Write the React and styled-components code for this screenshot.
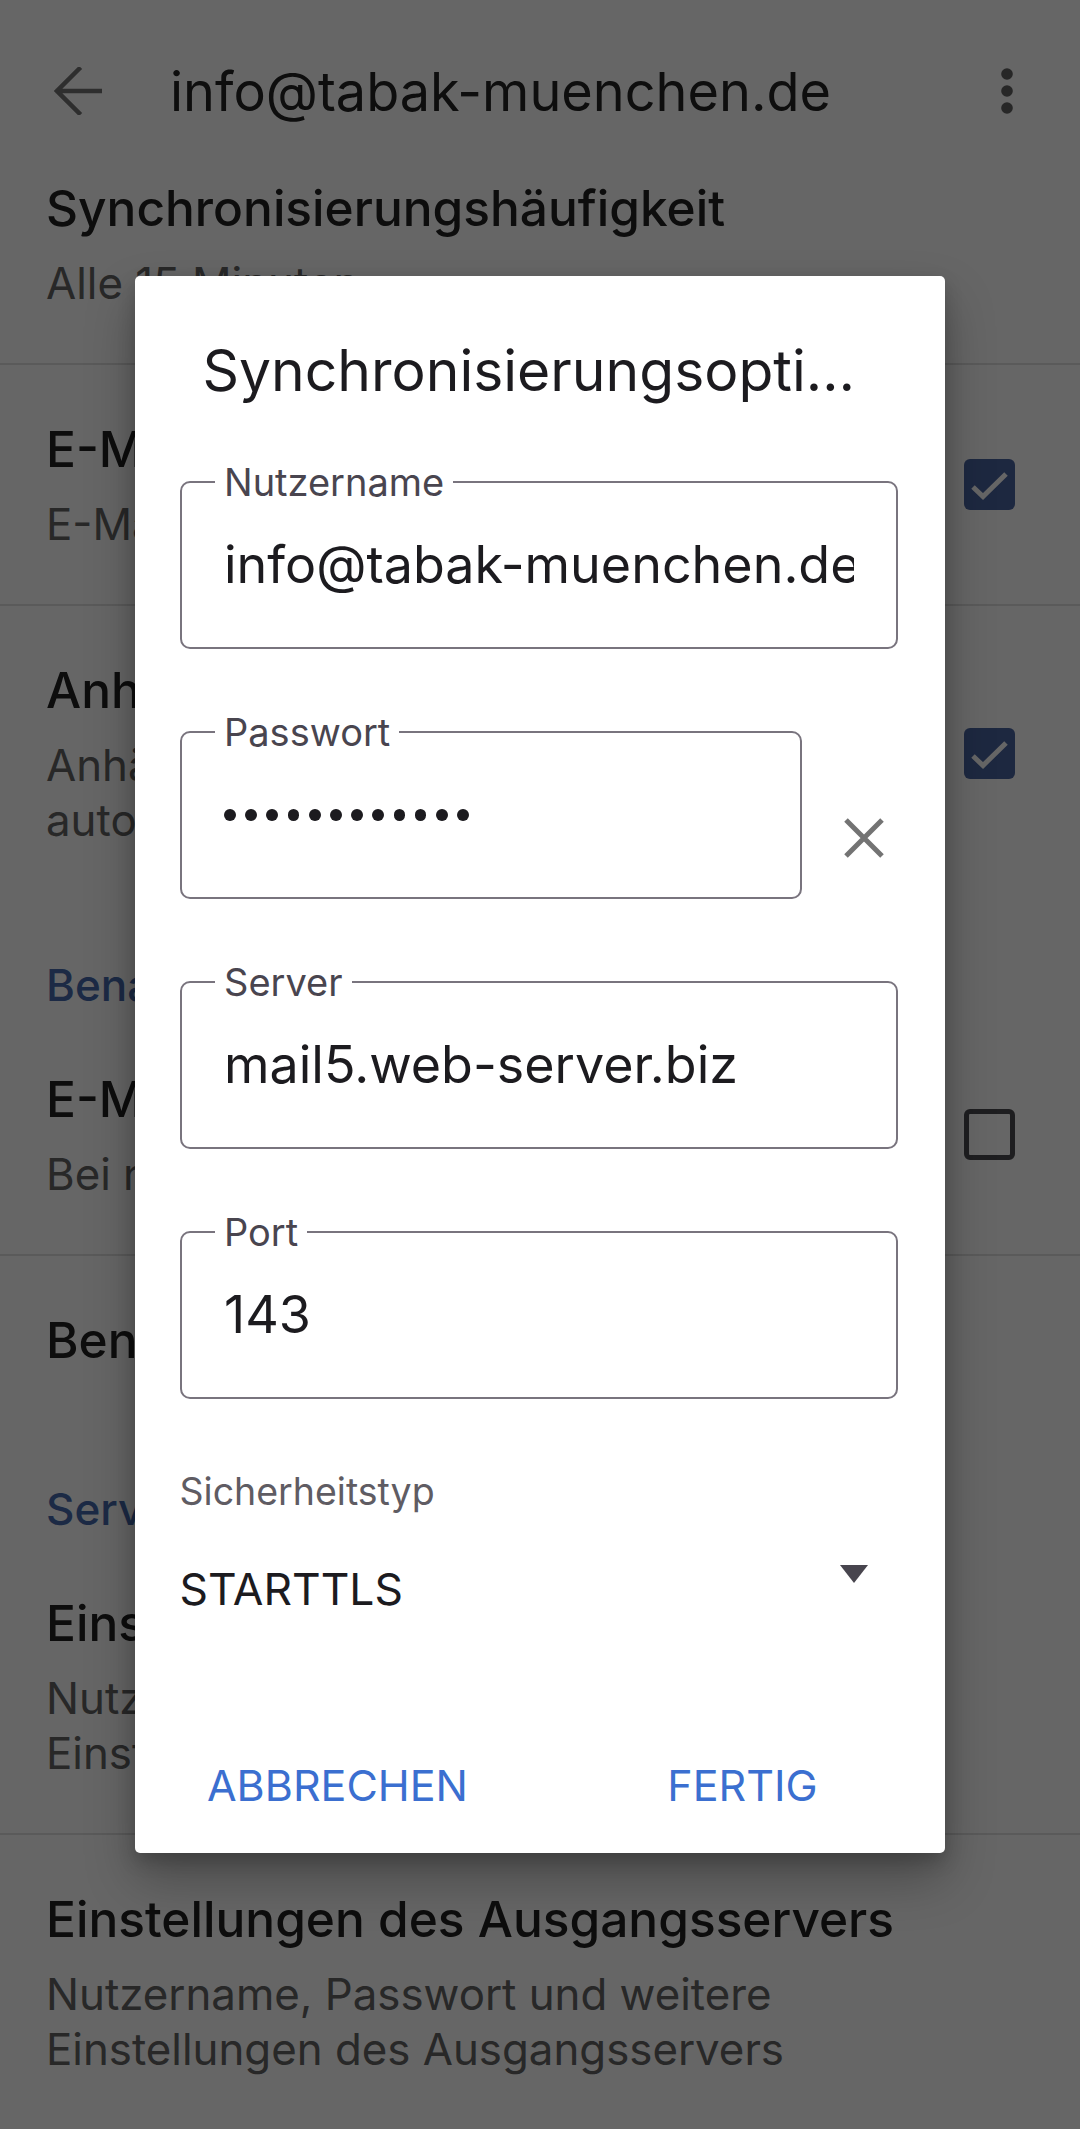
import React from "react";
import styled, { createGlobalStyle } from "styled-components";

const GlobalStyle = createGlobalStyle`
  html, body {
    margin: 0;
    padding: 0;
    background: #ffffff;
  }
  body {
    font-family: Inter, "Noto Sans", "Liberation Sans", sans-serif;
    -webkit-font-smoothing: antialiased;
  }
  * {
    box-sizing: border-box;
  }
`;

const Page = styled.div`
  position: relative;
  width: 1080px;
  height: 2129px;
  overflow: hidden;
  background: #ffffff;
`;

const AppBar = styled.div`
  display: flex;
  align-items: center;
  height: 176px;
  padding: 6px 49px 0 54px;
  .title {
    flex: 1;
    margin-left: 68px;
    font-size: 54px;
    color: #232323;
    white-space: nowrap;
  }
`;

const SettingRow = styled.div`
  display: flex;
  align-items: center;
  padding: ${(p) => (p.$first ? "0" : "52px")} 65px 52px 46px;
  border-bottom: ${(p) => (p.$divider ? "2px solid #e1e1e1" : "0")};
  .texts {
    flex: 1;
    min-width: 0;
  }
  .rowTitle {
    font-size: 49.6px;
    font-weight: 500;
    line-height: 64px;
    color: #222222;
    white-space: nowrap;
  }
  .rowSub {
    margin-top: 16px;
    font-size: 43.8px;
    line-height: 55px;
    color: #646464;
  }
`;

const SectionHeader = styled.div`
  padding: 55px 46px 0;
  font-size: 44px;
  font-weight: 500;
  line-height: 60px;
  color: #466aad;
  white-space: nowrap;
`;

const CheckBox = styled.div`
  display: flex;
  align-items: center;
  justify-content: center;
  flex-shrink: 0;
  width: 51px;
  height: 51px;
  margin-left: 30px;
  border-radius: 6px;
  background: ${(p) => (p.$checked ? "#4a64a0" : "transparent")};
  border: ${(p) => (p.$checked ? "0" : "5px solid #4b4b50")};
`;

const Scrim = styled.div`
  position: absolute;
  inset: 0;
  display: flex;
  align-items: center;
  justify-content: center;
  background: rgba(0, 0, 0, 0.6);
`;

const Dialog = styled.div`
  width: 810px;
  padding: 60px 47.5px 38px 44.5px;
  background: #ffffff;
  border-radius: 5px;
  box-shadow: 0 26px 50px rgba(0, 0, 0, 0.28), 0 8px 18px rgba(0, 0, 0, 0.18);
`;

const DialogTitle = styled.div`
  padding: 0 40px 0 23px;
  font-size: 57px;
  line-height: 70px;
  color: #1c1b1f;
  white-space: nowrap;
  overflow: hidden;
  text-overflow: ellipsis;
`;

const FieldList = styled.div`
  display: flex;
  flex-direction: column;
  gap: 82px;
  margin-top: 75px;
`;

const FieldRow = styled.div`
  display: flex;
`;

const Field = styled.div`
  position: relative;
  display: flex;
  align-items: center;
  width: ${(p) => p.$width || 718}px;
  height: 168px;
  padding: 0 42px 0 42.5px;
  border: 2.5px solid #79747e;
  border-radius: 10px;
`;

const FloatLabel = styled.span`
  position: absolute;
  top: -21px;
  left: 33.5px;
  padding: 0 9px;
  background: #ffffff;
  font-size: 38px;
  line-height: 40px;
  color: #49454f;
`;

const FieldValue = styled.div`
  overflow: hidden;
  white-space: nowrap;
  font-size: 52px;
  line-height: 64px;
  color: #1c1b1f;
`;

const Dots = styled.div`
  display: flex;
  gap: 9.4px;
  span {
    width: 11.8px;
    height: 11.8px;
    border-radius: 50%;
    background: #1c1b1f;
  }
`;

const ClearButton = styled.div`
  display: flex;
  flex: 1;
  justify-content: flex-end;
  padding: 86px 13px 0 0;
`;

const SelectBlock = styled.div`
  margin-top: 69px;
  .selectLabel {
    font-size: 37.5px;
    line-height: 48px;
    color: #5f5c63;
  }
  .selectRow {
    display: flex;
    align-items: flex-start;
    justify-content: space-between;
    margin-top: 43px;
    padding-right: 30px;
  }
  .selectValue {
    font-size: 44.4px;
    line-height: 60px;
    color: #1c1b1f;
  }
  .caret {
    margin-top: 6px;
  }
`;

const Actions = styled.div`
  display: grid;
  grid-template-columns: 1fr 1fr;
  margin: 136px -47.5px 0 -44.5px;
`;

const TextButton = styled.div`
  text-align: center;
  font-size: 43px;
  line-height: 60px;
  color: #3b6fd0;
`;

const BackIcon = () => (
  <svg width="48" height="48" viewBox="0 0 48 48" fill="none">
    <path
      d="M47 24 H4 M25 2 L3 24 L25 46"
      stroke="#747474"
      strokeWidth="4.5"
      strokeLinecap="square"
    />
  </svg>
);

const MoreIcon = () => (
  <svg width="48" height="48" viewBox="0 0 48 48">
    <circle cx="24" cy="7" r="5.8" fill="#616161" />
    <circle cx="24" cy="24" r="5.8" fill="#616161" />
    <circle cx="24" cy="41" r="5.8" fill="#616161" />
  </svg>
);

const CheckMark = () => (
  <svg width="51" height="51" viewBox="0 0 51 51" fill="none">
    <path d="M9 28 L19 37.5 L42 15" stroke="#ffffff" strokeWidth="5" />
  </svg>
);

const CloseIcon = () => (
  <svg width="42" height="42" viewBox="0 0 42 42">
    <path d="M3 3 L39 39 M39 3 L3 39" stroke="#737373" strokeWidth="5" />
  </svg>
);

const Caret = () => (
  <svg width="28" height="18" viewBox="0 0 28 18">
    <path d="M0 0 H28 L14 18 Z" fill="#48454e" />
  </svg>
);

const Setting = ({ title, sub, first, divider, checkbox }) => (
  <SettingRow $first={first} $divider={divider}>
    <div className="texts">
      <div className="rowTitle">{title}</div>
      {sub && <div className="rowSub">{sub}</div>}
    </div>
    {checkbox !== undefined && (
      <CheckBox $checked={checkbox}>{checkbox && <CheckMark />}</CheckBox>
    )}
  </SettingRow>
);

const App = () => {
  return (
    <>
      <GlobalStyle />
      <Page>
        <AppBar>
          <BackIcon />
          <div className="title">info@tabak-muenchen.de</div>
          <MoreIcon />
        </AppBar>
        <Setting
          first
          divider
          title="Synchronisierungshäufigkeit"
          sub="Alle 15 Minuten"
        />
        <Setting
          divider
          checkbox={true}
          title="E-Mails synchronisieren"
          sub="E-Mails für dieses Konto synchronisieren"
        />
        <Setting
          checkbox={true}
          title="Anhänge herunterladen"
          sub="Anhänge neuer Nachrichten über WLAN automatisch herunterladen"
        />
        <SectionHeader>Benachrichtigungseinstellungen</SectionHeader>
        <Setting
          divider
          checkbox={false}
          title="E-Mail-Benachrichtigungen"
          sub="Bei neuen E-Mails benachrichtigen"
        />
        <Setting title="Benachrichtigungen verwalten" />
        <SectionHeader>Servereinstellungen</SectionHeader>
        <Setting
          divider
          title="Einstellungen des Eingangsservers"
          sub="Nutzername, Passwort und weitere Einstellungen des Eingangsservers"
        />
        <Setting
          title="Einstellungen des Ausgangsservers"
          sub="Nutzername, Passwort und weitere Einstellungen des Ausgangsservers"
        />

        <Scrim>
          <Dialog>
            <DialogTitle>Synchronisierungsoptionen</DialogTitle>
            <FieldList>
              <Field>
                <FloatLabel>Nutzername</FloatLabel>
                <FieldValue>info@tabak-muenchen.de</FieldValue>
              </Field>
              <FieldRow>
                <Field $width={622}>
                  <FloatLabel>Passwort</FloatLabel>
                  <Dots>
                    {Array.from({ length: 12 }).map((_, i) => (
                      <span key={i} />
                    ))}
                  </Dots>
                </Field>
                <ClearButton>
                  <CloseIcon />
                </ClearButton>
              </FieldRow>
              <Field>
                <FloatLabel>Server</FloatLabel>
                <FieldValue>mail5.web-server.biz</FieldValue>
              </Field>
              <Field>
                <FloatLabel>Port</FloatLabel>
                <FieldValue>143</FieldValue>
              </Field>
            </FieldList>
            <SelectBlock>
              <div className="selectLabel">Sicherheitstyp</div>
              <div className="selectRow">
                <div className="selectValue">STARTTLS</div>
                <div className="caret">
                  <Caret />
                </div>
              </div>
            </SelectBlock>
            <Actions>
              <TextButton>ABBRECHEN</TextButton>
              <TextButton>FERTIG</TextButton>
            </Actions>
          </Dialog>
        </Scrim>
      </Page>
    </>
  );
};

export default App;
